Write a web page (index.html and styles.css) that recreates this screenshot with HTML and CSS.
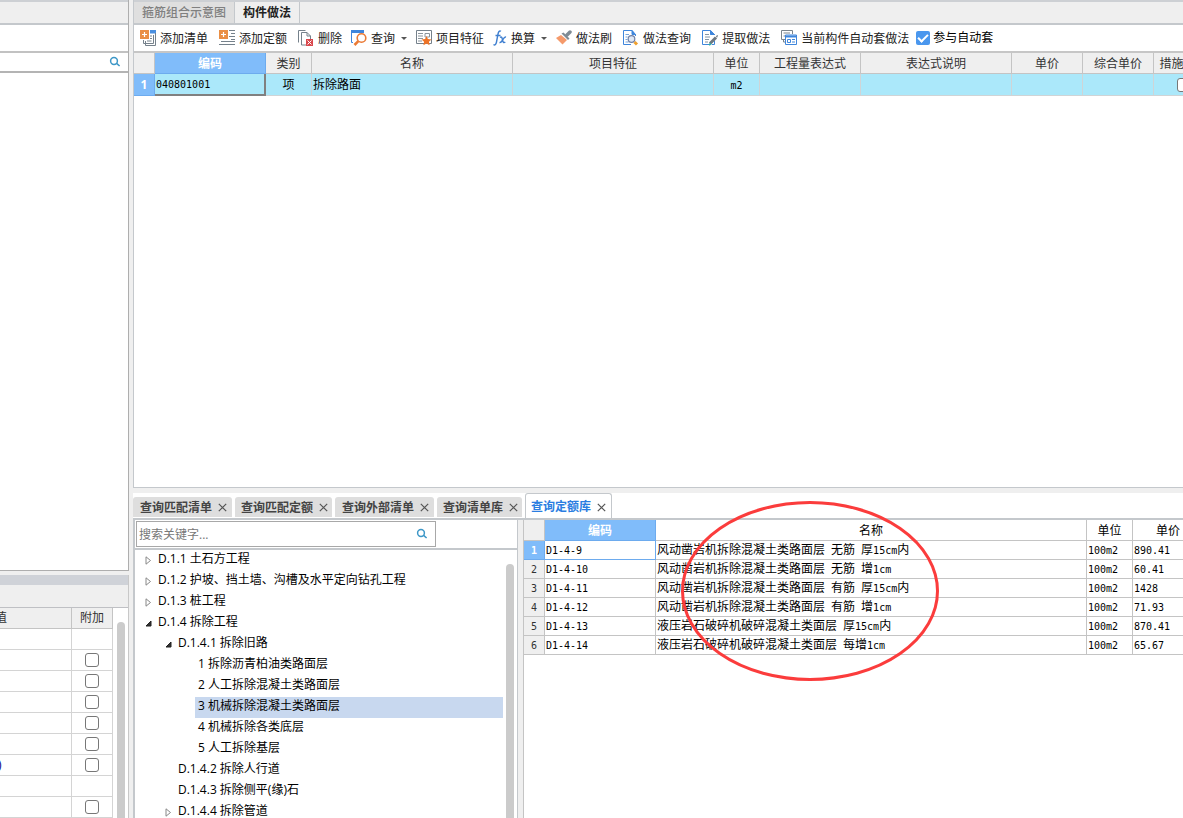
FILE: index.html
```html
<!DOCTYPE html>
<html lang="zh-CN">
<head>
<meta charset="utf-8">
<title>构件做法</title>
<link rel="stylesheet" href="styles.css">
</head>
<body>
<div class="app">
  <aside class="side">
    <section class="side-top">
      <div class="side-caption"></div>
      <div class="side-tools"></div>
      <div class="side-search">
        <input type="text" aria-label="搜索构件">
        <svg class="lens" viewBox="0 0 12 12"><circle cx="5" cy="5" r="3.4"/><path d="M7.6 7.4 10.6 10"/></svg>
      </div>
    </section>
    <section class="side-bottom">
      <div class="side-strip"></div>
      <div class="side-caption"></div>
      <div class="side-grid">
        <table class="props">
          <colgroup><col class="w-val"><col class="w-add"></colgroup>
          <thead><tr><th class="clip">值</th><th>附加</th></tr></thead>
          <tbody>
            <tr><td></td><td></td></tr>
            <tr><td></td><td><input type="checkbox" class="box" aria-label="附加 2"></td></tr>
            <tr><td></td><td><input type="checkbox" class="box" aria-label="附加 3"></td></tr>
            <tr><td></td><td><input type="checkbox" class="box" aria-label="附加 4"></td></tr>
            <tr><td></td><td><input type="checkbox" class="box" aria-label="附加 5"></td></tr>
            <tr><td></td><td><input type="checkbox" class="box" aria-label="附加 6"></td></tr>
            <tr><td class="paren">)</td><td><input type="checkbox" class="box" aria-label="附加 7"></td></tr>
            <tr><td></td><td></td></tr>
            <tr><td></td><td><input type="checkbox" class="box" aria-label="附加 9"></td></tr>
          </tbody>
        </table>
        <div class="thumb side-thumb"></div>
      </div>
    </section>
  </aside>

  <main class="main">
    <section class="upper">
      <nav class="tabs">
        <button type="button" class="tab">箍筋组合示意图</button>
        <button type="button" class="tab tab-on">构件做法</button>
      </nav>
      <div class="toolbar">
        <button type="button" class="tool"><svg class="ico" viewBox="0 0 16 16"><path d="M10 0h6v3.500h-6z" fill="#4a8fe0"/><path d="M15.500 3v12.500H5.500V11M13.500 5v8.500h-10V10" fill="none" stroke="#75818b"/><path d="M7 11h4.500M10 8.500h2M10 6h2" stroke="#75818b"/><path d="M0 0h9v9H0z" fill="#ea8f45"/><path d="M4.500 2v5M2 4.500h5" stroke="#fff" stroke-width="1.200"/></svg><span>添加清单</span></button>
        <button type="button" class="tool"><svg class="ico" viewBox="0 0 16 16"><path d="M10 .5h6M12 3.500h4M10 6.500h6M12 9.500h4M2 11.500h14M0 14.500h16" stroke="#75818b"/><path d="M0 0h9v9H0z" fill="#ea8f45"/><path d="M4.500 2v5M2 4.500h5" stroke="#fff" stroke-width="1.200"/></svg><span>添加定额</span></button>
        <button type="button" class="tool"><svg class="ico" viewBox="0 0 16 16"><path d="M.5 12.500V.5h7M3.500 15V2.500H9L12.500 6v3M9 2.500V6h3.500M3.500 15H8" fill="none" stroke="#75818b"/><path d="M8 9h7v7H8z" fill="#d9474c"/><path d="m9.500 10.500 4 4m0-4-4 4" stroke="#fff"/></svg><span>删除</span></button>
        <button type="button" class="tool split"><svg class="ico" viewBox="0 0 16 16"><path d="M0 0h13v3H0z" fill="#3f86dc"/><path d="M.5 2v10.500H2" fill="none" stroke="#3f86dc"/><circle cx="10.500" cy="8" r="4.300" fill="#fff" stroke="#ea7a35" stroke-width="1.600"/><path d="M7.300 11.200 3.500 15" stroke="#ea7a35" stroke-width="2.600"/></svg><span>查询</span><i class="caret"></i></button>
        <button type="button" class="tool"><svg class="ico" viewBox="0 0 16 16"><path d="M.5.500h15v13H.5z" fill="#fff" stroke="#75818b"/><path d="M2 3.500h5M2 6h5M2 8.500h5M2 11h4M9 3.500h4.500V7H9z" fill="none" stroke="#8a949c"/><path d="m10.500 6 1.400 3 3.600.4-2.600 2.300.7 3.600-3.100-1.800-3.100 1.800.7-3.600L5.500 9.400l3.600-.4z" fill="#ee7326"/></svg><span>项目特征</span></button>
        <button type="button" class="tool split"><svg class="ico fx" viewBox="0 0 14 16"><path d="M8 1.300C6.300.100 5.400 2 4.900 4.500L3.500 12c-.5 2.500-1.500 3.600-3 2.500M2.500 5.500h5M7 7.500c2-1.500 2 .5 2.500 2.500s1 3.500 2.800 2M13 7c-1.500-.5-2.500 1.500-3.400 3S8 13 6.500 12.500" fill="none" stroke="#3f7fd0" stroke-width="1.400"/></svg><span>换算</span><i class="caret"></i></button>
        <button type="button" class="tool"><svg class="ico" viewBox="0 0 16 16"><path d="m11 5 3-3" stroke="#7f8b95" stroke-width="3.500" stroke-linecap="round"/><path d="m5.500 3.500 2-1 6 6-1.500 1.500z" fill="#7f8b95"/><path d="M5 5 0 8l6.500 6.500L11 10z" fill="#f59a6b"/></svg><span>做法刷</span></button>
        <button type="button" class="tool"><svg class="ico" viewBox="0 0 16 16"><path d="M12.500 6V4.500L9 .5H.5v14H8M9 .5v4h3.500" fill="#fff" stroke="#3f86dc"/><path d="M9 0v5h4z" fill="#3f86dc"/><path d="M2.500 4.500H6M2.500 7h2M2.500 9.500h2M2.500 12h3" stroke="#75a5dd"/><circle cx="8.500" cy="9" r="3.300" fill="#dfe8f5" stroke="#7180a5" stroke-width="1.200"/><path d="m11.500 12 2.500 2.500" stroke="#efa02e" stroke-width="3"/></svg><span>做法查询</span></button>
        <button type="button" class="tool"><svg class="ico" viewBox="0 0 16 16"><path d="M12.500 5V4.500L8.500.5H.5v14H7M8.500.5v4h4M12.500 11v3.500H10" fill="none" stroke="#3f86dc"/><path d="M8.500 0v5h4.500z" fill="#3f86dc"/><path d="M3 4.500h4M3 7h5M3 9.500h4M3 12h3" stroke="#8494a3"/><path d="m8 13.500 6-6" stroke="#6d7780" stroke-width="3"/><path d="m7 15 2-1.500" stroke="#2eaaa5" stroke-width="2"/><path d="m14 6 2-1-1 3" fill="#59636b"/></svg><span>提取做法</span></button>
        <button type="button" class="tool"><svg class="ico" viewBox="0 0 16 16"><path d="M4 9.500H.5V.5h11V4M2.500 3H9M2.500 6H4M4 12H2.500V9.500" fill="none" stroke="#7a848c"/><path d="M4.500 5h11v9.500h-11z" fill="#fff" stroke="#3f86dc"/><path d="M5 6.500h10" stroke="#3f86dc" stroke-width="2"/><path d="M6.500 9.500h3v3h-3zM11 9.500h3M11 12h3" fill="none" stroke="#3f86dc"/></svg><span>当前构件自动套做法</span></button>
        <label class="auto"><input type="checkbox" class="tick" checked><span>参与自动套</span></label>
      </div>
      <div class="grid-wrap">
        <table class="grid">
          <colgroup><col class="w-no"><col class="w-code"><col class="w-unit"><col class="w-name"><col class="w-name"><col class="w-unit"><col class="w-expr"><col class="w-desc"><col class="w-price"><col class="w-price"><col class="w-step"></colgroup>
          <thead><tr><th></th><th class="th-on">编码</th><th>类别</th><th>名称</th><th>项目特征</th><th>单位</th><th>工程量表达式</th><th>表达式说明</th><th>单价</th><th>综合单价</th><th>措施项目</th></tr></thead>
          <tbody><tr><th class="no-on">1</th><td class="cell-on"><span class="mono">040801001</span></td><td class="mid">项</td><td>拆除路面</td><td></td><td class="mid"><span class="mono">m2</span></td><td></td><td></td><td></td><td></td><td class="mid"><input type="checkbox" class="box" aria-label="措施项目"></td></tr></tbody>
        </table>
      </div>
    </section>

    <section class="lower">
      <nav class="qtabs">
        <button type="button" class="qtab"><span>查询匹配清单</span><svg class="x" viewBox="0 0 9 9"><path d="m.8.800 7.400 7.400m0-7.400L.8 8.200"/></svg></button>
        <button type="button" class="qtab"><span>查询匹配定额</span><svg class="x" viewBox="0 0 9 9"><path d="m.8.800 7.400 7.400m0-7.400L.8 8.200"/></svg></button>
        <button type="button" class="qtab"><span>查询外部清单</span><svg class="x" viewBox="0 0 9 9"><path d="m.8.800 7.400 7.400m0-7.400L.8 8.200"/></svg></button>
        <button type="button" class="qtab"><span>查询清单库</span><svg class="x" viewBox="0 0 9 9"><path d="m.8.800 7.400 7.400m0-7.400L.8 8.200"/></svg></button>
        <button type="button" class="qtab qtab-on"><span>查询定额库</span><svg class="x" viewBox="0 0 9 9"><path d="m.8.800 7.400 7.400m0-7.400L.8 8.200"/></svg></button>
      </nav>
      <div class="panes">
        <div class="tree-pane">
          <div class="find">
            <div class="find-box">
              <input type="text" placeholder="搜索关键字..." aria-label="搜索关键字">
              <svg class="lens" viewBox="0 0 12 12"><circle cx="5" cy="5" r="3.4"/><path d="M7.600 7.400 10.600 10"/></svg>
            </div>
          </div>
          <div class="tree-wrap">
            <ul class="tree">
              <li class="l1"><svg class="arrow" viewBox="0 0 7 9"><path class="shut" d="M1 .800v7.400L5.500 4.500z"/></svg>D.1.1 土石方工程</li>
              <li class="l1"><svg class="arrow" viewBox="0 0 7 9"><path class="shut" d="M1 .800v7.400L5.500 4.500z"/></svg>D.1.2 护坡、挡土墙、沟槽及水平定向钻孔工程</li>
              <li class="l1"><svg class="arrow" viewBox="0 0 7 9"><path class="shut" d="M1 .800v7.400L5.500 4.500z"/></svg>D.1.3 桩工程</li>
              <li class="l1"><svg class="arrow" viewBox="0 0 7 9"><path class="open" d="M6 2v5H1z"/></svg>D.1.4 拆除工程</li>
              <li class="l2"><svg class="arrow" viewBox="0 0 7 9"><path class="open" d="M6 2v5H1z"/></svg>D.1.4.1 拆除旧路</li>
              <li class="l3">1 拆除沥青柏油类路面层</li>
              <li class="l3">2 人工拆除混凝土类路面层</li>
              <li class="l3 picked">3 机械拆除混凝土类路面层</li>
              <li class="l3">4 机械拆除各类底层</li>
              <li class="l3">5 人工拆除基层</li>
              <li class="l2"><i class="arrow"></i>D.1.4.2 拆除人行道</li>
              <li class="l2"><i class="arrow"></i>D.1.4.3 拆除侧平(缘)石</li>
              <li class="l2"><svg class="arrow" viewBox="0 0 7 9"><path class="shut" d="M1 .800v7.400L5.500 4.500z"/></svg>D.1.4.4 拆除管道</li>
            </ul>
            <div class="thumb tree-thumb"></div>
          </div>
        </div>
        <div class="list-pane">
          <table class="grid quota">
            <colgroup><col class="w-no"><col class="w-code"><col class="w-long"><col class="w-unit"><col class="w-price"></colgroup>
            <thead><tr><th></th><th class="th-on">编码</th><th>名称</th><th>单位</th><th>单价</th></tr></thead>
            <tbody>
              <tr><th class="no-on">1</th><td class="cell-pick"><span class="mono">D1-4-9</span></td><td>风动凿岩机拆除混凝土类路面层<span class="mono"> </span>无筋<span class="mono"> </span>厚<span class="mono">15cm</span>内</td><td><span class="mono">100m2</span></td><td><span class="mono">890.41</span></td></tr>
              <tr><th>2</th><td><span class="mono">D1-4-10</span></td><td>风动凿岩机拆除混凝土类路面层<span class="mono"> </span>无筋<span class="mono"> </span>增<span class="mono">1cm</span></td><td><span class="mono">100m2</span></td><td><span class="mono">60.41</span></td></tr>
              <tr><th>3</th><td><span class="mono">D1-4-11</span></td><td>风动凿岩机拆除混凝土类路面层<span class="mono"> </span>有筋<span class="mono"> </span>厚<span class="mono">15cm</span>内</td><td><span class="mono">100m2</span></td><td><span class="mono">1428</span></td></tr>
              <tr><th>4</th><td><span class="mono">D1-4-12</span></td><td>风动凿岩机拆除混凝土类路面层<span class="mono"> </span>有筋<span class="mono"> </span>增<span class="mono">1cm</span></td><td><span class="mono">100m2</span></td><td><span class="mono">71.93</span></td></tr>
              <tr><th>5</th><td><span class="mono">D1-4-13</span></td><td>液压岩石破碎机破碎混凝土类面层<span class="mono"> </span>厚<span class="mono">15cm</span>内</td><td><span class="mono">100m2</span></td><td><span class="mono">870.41</span></td></tr>
              <tr><th>6</th><td><span class="mono">D1-4-14</span></td><td>液压岩石破碎机破碎混凝土类面层<span class="mono"> </span>每增<span class="mono">1cm</span></td><td><span class="mono">100m2</span></td><td><span class="mono">65.67</span></td></tr>
            </tbody>
          </table>
        </div>
      </div>
      <svg class="mark" viewBox="0 0 260 182"><ellipse cx="130" cy="91" rx="127.500" ry="88.500"/></svg>
    </section>
  </main>
</div>
</body>
</html>
```

FILE: styles.css
```css
* { box-sizing: border-box; }
body {
  margin: 0;
  background: #efefef;
  color: #000;
  font: 12px/20px "Open Sans", "Noto Sans CJK SC", sans-serif;
}
button, input { font: inherit; color: inherit; margin: 0; padding: 0; border: 0; background: none; }
i { font-style: normal; }
svg { display: block; flex: none; }
.app { display: flex; height: 100vh; overflow: hidden; }

/* left column */
.side { flex: none; width: 129px; display: flex; flex-direction: column; gap: 4px; }
.side-top { flex: 571 1 0; background: #fff; border: 1px solid #aeaeae; border-width: 0 1px 1px 0; }
.side-top .side-caption { height: 25px; border-top: 2px solid #cdd0d4; border-bottom: 2px solid #c4c8cc; }
.side-caption { height: 23px; background: #efefef; border-bottom: 1px solid #bfc0c4; }
.side-tools { height: 28px; border-bottom: 2px solid #c2c2c2; }
.side-search { display: flex; align-items: center; height: 20px; padding-right: 7px; border-bottom: 2px solid #b4b4b4; }
.side-search input { flex: 1; min-width: 0; height: 18px; outline: 0; }
.lens { width: 12px; height: 12px; fill: none; stroke: #3d97c7; stroke-width: 1.5; }
.side-bottom { flex: 243 1 0; min-height: 0; display: flex; flex-direction: column; background: #fff; border-right: 1px solid #c8c8c8; }
.side-strip { flex: none; height: 10px; background: #cfd2d8; }
.side-bottom .side-caption { flex: none; }
.side-grid { flex: 1; min-height: 0; display: flex; overflow: hidden; }
.props { width: 113px; height: 210px; table-layout: fixed; border-spacing: 0; flex: none; align-self: flex-start; }
.props th, .props td { height: 21px; padding: 0; border: solid #d4d4d4; border-width: 0 1px 1px 0; text-align: center; line-height: 20px; }
.props th { font-weight: 400; color: #333; background: #efefef; border-color: #c4c4c4; }
.props .clip { text-align: left; text-indent: -5px; }
.props .paren { text-align: left; text-indent: -2px; color: #008; }
.w-val { width: 72px; }
.w-add { width: 41px; }
.thumb { width: 8px; flex: none; background: #cbcbcb; border-radius: 4px 4px 0 0; }
.side-thumb { margin: 14px 0 0 4px; }
.box { appearance: none; display: block; width: 14px; height: 14px; margin: 0 auto; background: #fff; border: 1px solid #777; border-radius: 3px; }

/* upper panel */
.main { flex: 1; min-width: 0; margin-left: 4px; display: flex; flex-direction: column; gap: 5px; }
.upper { flex: 488 1 0; min-height: 0; overflow: hidden; background: #fff; border: solid #c4c8cc; border-width: 0 0 1px 1px; }
.tabs { display: flex; height: 25px; background: #efefef; border-top: 2px solid #cdd0d4; border-bottom: 2px solid #c4c8cc; }
.tab { padding: 0 8px; border-right: 1px solid #c4c8cc; background: #dfdfdf; color: #808080; white-space: nowrap; font-weight: 500; }
.tab-on { background: #efefef; color: #222; font-weight: 700; }
.toolbar { display: flex; align-items: center; gap: 1px; height: 28px; padding-left: 1px; border-bottom: 2px solid #c6c6c6; color: #222; white-space: nowrap; }
.tool { display: flex; align-items: center; gap: 4px; height: 22px; padding: 0 5px; border-radius: 3px; }
.tool span { padding-top: 2px; }
.split { padding: 0 3px; }
.ico { width: 16px; height: 16px; }
.fx { width: 14px; }
.caret { margin-left: 2px; border: solid transparent; border-width: 3px 3px 0; border-top-color: #555; }
.auto { display: flex; align-items: center; gap: 3px; padding-left: 1px; color: #000; }
.tick { appearance: none; width: 14px; height: 14px; border-radius: 2px; background: #4a97ee; display: grid; place-items: center; }
.tick::after { content: ""; width: 8px; height: 4px; border: solid #fff; border-width: 0 0 2px 2px; transform: translateY(-1px) rotate(-45deg); }

/* data grids */
.grid-wrap { overflow: hidden; }
.grid { width: 1080px; table-layout: fixed; border-spacing: 0; }
.grid th, .grid td { padding: 0; border: solid #c4c4c4; border-width: 0 1px 1px 0; white-space: nowrap; }
.grid th { height: 21px; background: #efefef; color: #333; font-weight: 400; }
.grid thead th { padding-top: 2px; line-height: 18px; }
.grid td { height: 22px; padding-left: 1px; border-color: #d0d4d6; background: #abe8fa; text-align: left; }
.grid .th-on { background: #80bcfa; border-color: #6dabee; color: #fff; font-weight: 700; }
.grid .no-on { background: #80bcfa; border-color: #6dabee; color: #fff; font-weight: 700; }
.grid .mid { padding: 0; text-align: center; }
.grid .cell-on { border: solid #808080; border-width: 0 2px 2px 0; }
.mono { font: 10px/16px "DejaVu Sans Mono", monospace; white-space: pre; }
.w-no { width: 21px; }
.w-code { width: 111px; }
.w-unit { width: 46px; }
.w-name { width: 201px; }
.w-expr { width: 101px; }
.w-desc { width: 151px; }
.w-price { width: 71px; }
.w-step { width: 60px; }
.w-long { width: 431px; }

/* lower panel */
.lower { position: relative; flex: 325 1 0; min-height: 0; display: flex; flex-direction: column; overflow: hidden; background: #fff; }
.qtabs { flex: none; display: flex; align-items: flex-end; gap: 3px; height: 27px; border-bottom: 2px solid #c4c8cc; }
.qtab { display: flex; align-items: center; gap: 6px; height: 20px; margin-bottom: 1px; padding: 1px 5px 0 7px; background: #dedede; border-radius: 3px 3px 0 0; color: #444; font-weight: 700; white-space: nowrap; }
.qtab:nth-child(even) { padding-right: 4px; padding-left: 6px; }
.qtab-on { height: 25px; margin-bottom: 0; padding: 2px 5px 0; background: #fff; border: 1px solid #c4c8cc; border-bottom: 0; color: #2a7de1; }
.x { width: 9px; height: 9px; fill: none; stroke: #555; stroke-width: 1.2; }
.panes { flex: 1; min-height: 0; display: flex; background: linear-gradient(90deg, #fff 385px, #efefef 385px, #efefef 390px, #fff 390px); }
.tree-pane { flex: none; width: 385px; display: flex; flex-direction: column; border: solid #c4c8cc; border-width: 0 1px 0 2px; }
.find { flex: none; height: 30px; padding: 1px; border-bottom: 2px solid #c4c8cc; }
.find-box { display: flex; align-items: center; width: 300px; height: 26px; padding: 0 7px 0 2px; border: 1px solid #a8a8a8; }
.find-box input { flex: 1; min-width: 0; height: 22px; outline: 0; }
.find-box input::placeholder { color: #777; opacity: 1; }
.tree-wrap { flex: 1; min-height: 0; display: flex; overflow: hidden; }
.tree { flex: 1; margin: 0 3px 0 0; padding: 0; list-style: none; }
.tree li { display: flex; align-items: flex-start; height: 21px; line-height: 18px; white-space: pre; }
.arrow { align-self: center; width: 7px; height: 9px; margin-right: 6px; }
.shut { fill: #fff; stroke: #888; }
.open { fill: #333; stroke: #222; }
.l1 { padding-left: 10px; }
.l2 { padding-left: 30px; }
.tree .l3 { margin-left: 60px; padding-left: 3px; }
.picked { background: #c8d8ef; }
.tree-thumb { margin: 14px 3px 0 0; }
.list-pane { flex: 1; min-width: 0; margin-left: 5px; overflow: hidden; border-left: 1px solid #c4c4c4; }
.quota { width: 680px; }
.quota thead th { background: #fff; color: #000; }
.quota thead th:first-child { background: #efefef; }
.quota thead .th-on { background: #80bcfa; color: #fff; }
.quota tbody th, .quota td { height: 19px; line-height: 18px; }
.quota td { background: #fff; border-color: #c4c4c4; }
.quota tbody th { padding-top: 2px; font: 10px/16px "DejaVu Sans Mono", monospace; }
.quota .cell-pick { border-color: #6dabee; }
.mark { position: absolute; left: 547px; top: 7px; width: 260px; height: 182px; fill: none; stroke: #fb3c3c; stroke-width: 3; pointer-events: none; }
```
